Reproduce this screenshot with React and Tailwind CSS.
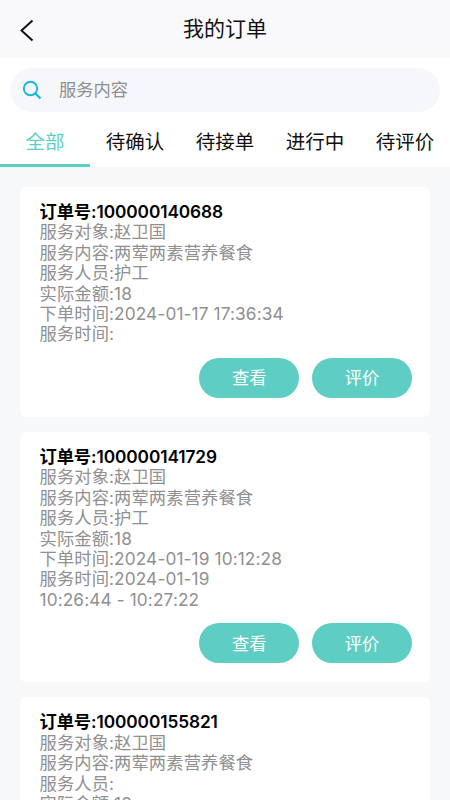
import React from 'react';

const orders = [
  {
    no: '100000140688',
    lines: ['服务对象:赵卫国', '服务内容:两荤两素营养餐食', '服务人员:护工', '实际金额:18', '下单时间:2024-01-17 17:36:34', '服务时间:'],
  },
  {
    no: '100000141729',
    lines: ['服务对象:赵卫国', '服务内容:两荤两素营养餐食', '服务人员:护工', '实际金额:18', '下单时间:2024-01-19 10:12:28', '服务时间:2024-01-19', '10:26:44 - 10:27:22'],
  },
  {
    no: '100000155821',
    lines: ['服务对象:赵卫国', '服务内容:两荤两素营养餐食', '服务人员:', '实际金额:18', '下单时间:2024-01-24 11:02:16', '服务时间:'],
  },
];

const tabs = ['全部', '待确认', '待接单', '进行中', '待评价'];

export default function App() {
  return (
    <div className="h-[800px] w-[450px] overflow-hidden bg-[#f6f8fa] font-['Inter','Noto_Sans_CJK_SC',sans-serif]">
      {/* 标题栏 */}
      <div className="flex h-[58px] items-center justify-center bg-[#f9f9fb] relative">
        <svg className="absolute left-[19px] top-[19px]" width="16" height="24" viewBox="0 0 16 24" fill="none">
          <path d="M13.5 1.5 L2.5 11.5 L13.5 21.5" stroke="#111" strokeWidth="2" />
        </svg>
        <span className="text-[21px] text-[#111]">我的订单</span>
      </div>

      {/* 搜索 */}
      <div className="bg-white px-[10px] pt-[10px]">
        <div className="flex h-[44px] items-center rounded-[22px] bg-[#f6f7fb] pl-[12px]">
          <svg width="20" height="20" viewBox="0 0 20 20" fill="none">
            <circle cx="8.5" cy="8.5" r="6.7" stroke="#15b5e6" strokeWidth="1.9" />
            <path d="M13.5 13.5 L18.5 18.5" stroke="#15b5e6" strokeWidth="2.1" />
          </svg>
          <span className="ml-[17px] text-[17.3px] text-[#8f8f8f]">服务内容</span>
        </div>
      </div>

      {/* 标签 */}
      <div className="flex h-[55px] bg-white pt-[8px]">
        {tabs.map((t, i) => (
          <div
            key={t}
            className={`flex w-[90px] justify-center border-b-[3px] pt-[8px] text-[19.5px] leading-[28px] ${i === 0 ? 'border-[#5ccfc4] text-[#5ccfc4]' : 'border-transparent text-[#111]'}`}
          >
            {t}
          </div>
        ))}
      </div>

      {/* 订单列表 */}
      <div className="flex flex-col gap-[15px] px-[20px] pt-[20px]">
        {orders.map((o) => (
          <div key={o.no} className="rounded-[6px] bg-white pb-[19px] pl-[19.5px] pr-[18px] pt-[15px]">
            <div className="text-[17.3px] font-semibold leading-[20.4px] tracking-[-0.1px] text-black">订单号:{o.no}</div>
            {o.lines.map((l) => (
              <div key={l} className="text-[17.3px] leading-[20.4px] tracking-[0.1px] text-[#909090]">{l}</div>
            ))}
            <div className="mt-[13.2px] flex justify-end gap-[12.7px]">
              <button className="h-[40px] w-[100px] rounded-[20px] bg-[#5ecdc3] text-[17.3px] text-white">查看</button>
              <button className="h-[40px] w-[100px] rounded-[20px] bg-[#5ecdc3] text-[17.3px] text-white">评价</button>
            </div>
          </div>
        ))}
      </div>
    </div>
  );
}
